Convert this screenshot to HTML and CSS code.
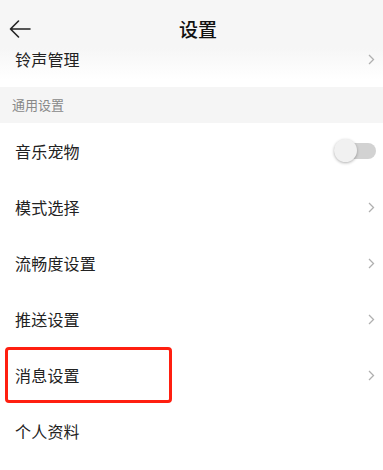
FILE: index.html
```html
<!DOCTYPE html>
<html lang="zh-CN">
<head>
<meta charset="utf-8">
<title>设置</title>
<link rel="stylesheet" href="styles.css">
</head>
<body>
<div class="page">
  <div class="top">
    <header class="header">
      <svg class="back" width="22" height="18" viewBox="0 0 22 18"><path d="M21 9H1.5M9.5 1L1.5 9l8 8" fill="none" stroke="#222" stroke-width="1.6" stroke-linecap="round" stroke-linejoin="round"/></svg>
      <h1 class="title">设置</h1>
    </header>
    <div class="row row-partial">
      <span class="label">铃声管理</span>
      <svg class="chev" width="7" height="11" viewBox="0 0 7 11"><path d="M1 1l4.5 4.5L1 10" fill="none" stroke="#b0b0b0" stroke-width="1.3"/></svg>
    </div>
  </div>
  <div class="section">通用设置</div>
  <div class="list">
    <div class="row">
      <span class="label">音乐宠物</span>
      <span class="toggle"><span class="knob"></span></span>
    </div>
    <div class="row">
      <span class="label">模式选择</span>
      <svg class="chev" width="7" height="11" viewBox="0 0 7 11"><path d="M1 1l4.5 4.5L1 10" fill="none" stroke="#b0b0b0" stroke-width="1.3"/></svg>
    </div>
    <div class="row">
      <span class="label">流畅度设置</span>
      <svg class="chev" width="7" height="11" viewBox="0 0 7 11"><path d="M1 1l4.5 4.5L1 10" fill="none" stroke="#b0b0b0" stroke-width="1.3"/></svg>
    </div>
    <div class="row">
      <span class="label">推送设置</span>
      <svg class="chev" width="7" height="11" viewBox="0 0 7 11"><path d="M1 1l4.5 4.5L1 10" fill="none" stroke="#b0b0b0" stroke-width="1.3"/></svg>
    </div>
    <div class="row row-marked">
      <span class="label">消息设置</span>
      <svg class="chev" width="7" height="11" viewBox="0 0 7 11"><path d="M1 1l4.5 4.5L1 10" fill="none" stroke="#b0b0b0" stroke-width="1.3"/></svg>
      <span class="mark"></span>
    </div>
    <div class="row">
      <span class="label">个人资料</span>
    </div>
  </div>
</div>
</body>
</html>
```
FILE: styles.css
```css
html, body {
  margin: 0;
  padding: 0;
  background: #fff;
}
body {
  font-family: "Noto Sans CJK SC", "Noto Sans", sans-serif;
  color: #222;
  width: 383px;
  height: 470px;
  overflow: hidden;
}
.page {
  display: flex;
  flex-direction: column;
}
.top {
  background: linear-gradient(to bottom, #f6f6f6 0, #f6f6f6 48px, #ffffff 80px);
  height: 87px;
  display: flex;
  flex-direction: column;
}
.header {
  height: 50px;
  display: flex;
  align-items: center;
  padding-left: 9px;
  padding-top: 8px;
  box-sizing: border-box;
}
.back {
  display: block;
  margin-top: -1px;
}
.title {
  margin: 0 0 0 148px;
  font-size: 19px;
  font-weight: 500;
  line-height: 20px;
  color: #111;
}
.section {
  height: 36px;
  background: #f5f5f5;
  font-size: 13px;
  color: #888;
  padding-left: 12px;
  display: flex;
  align-items: center;
  box-sizing: border-box;
  padding-bottom: 2px;
}
.list {
  display: flex;
  flex-direction: column;
}
.row {
  position: relative;
  height: 56px;
  display: flex;
  align-items: center;
  justify-content: space-between;
  padding: 0 8px 0 15px;
  box-sizing: border-box;
}
.row-partial {
  height: 24px;
  align-items: flex-start;
  padding-top: 0;
  margin-top: 0;
}
.row-partial .chev {
  margin-top: 4px;
}
.label {
  font-size: 16px;
  line-height: 18px;
  color: #222;
  letter-spacing: 0.2px;
}
.chev {
  display: block;
  margin-right: 0;
}
.toggle {
  position: relative;
  width: 42px;
  height: 16px;
  border-radius: 8px;
  background: #d2d2d2;
  margin-right: -1px;
}
.knob {
  position: absolute;
  left: 0;
  top: -4px;
  width: 23px;
  height: 23px;
  border-radius: 50%;
  background: #f1f1f1;
  box-shadow: 0 1px 3px rgba(0,0,0,0.3);
}
.mark {
  position: absolute;
  left: 5px;
  top: 0;
  width: 167px;
  height: 56px;
  border: 3px solid #ff1f10;
  border-radius: 4px;
  box-sizing: border-box;
}
```
